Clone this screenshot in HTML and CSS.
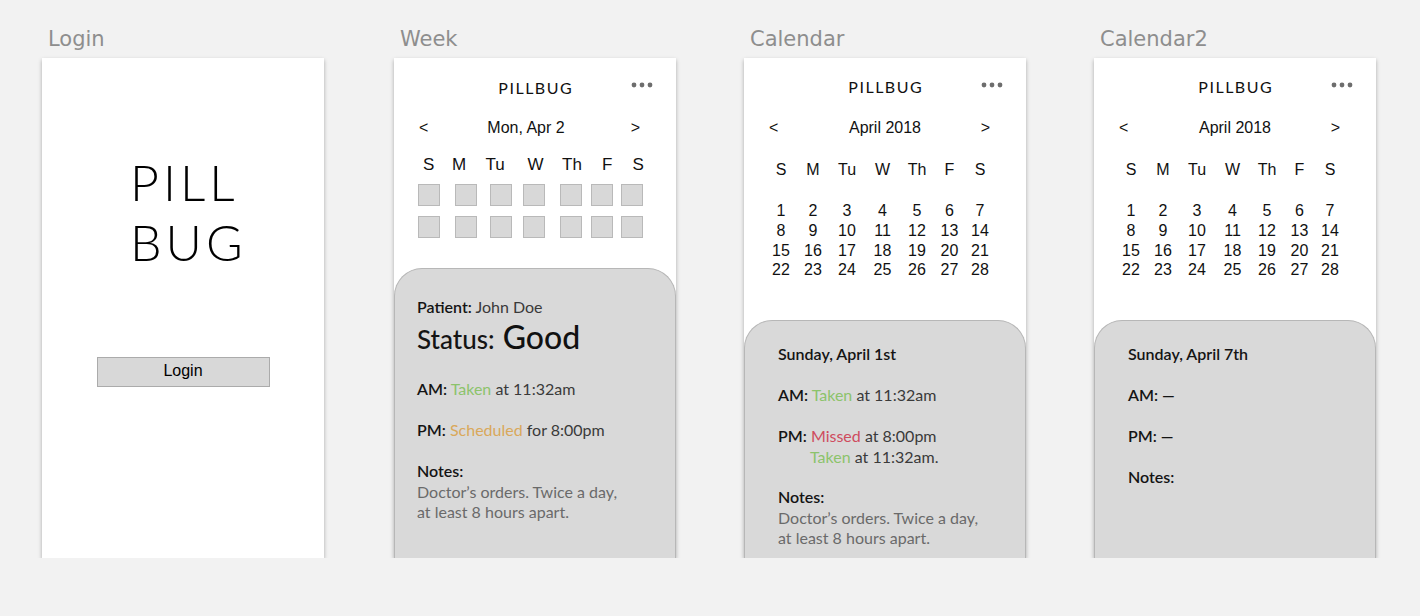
FILE: index.html
```html
<!DOCTYPE html>
<html lang="en">
	<head>

		<meta charset="UTF-8">
		<title>Pillbug</title>

		<link rel="stylesheet" href="styles.css">

	</head>
	<body>

		<div class="canvas">

			<!-- Login -->
			<div class="board-col first">
				<div class="board-label">Login</div>
				<div class="board login">
					<div class="brand">PILL<br>BUG</div>
					<div class="login-btn">Login</div>
				</div>
			</div>

			<!-- Week -->
			<div class="board-col">
				<div class="board-label">Week</div>
				<div class="board week">
					<div class="top-bar">
						<span></span>
						<span class="app-name">PILLBUG</span>
						<svg class="more" viewBox="0 0 22 6"><circle cx="3" cy="3" r="2.4"/><circle cx="11" cy="3" r="2.4"/><circle cx="19" cy="3" r="2.4"/></svg>
					</div>
					<div class="nav">
						<span>&lt;</span>
						<span class="nav-title">Mon, Apr 2</span>
						<span class="nav-next">&gt;</span>
					</div>
					<div class="week-days">
						<span>S</span><span>M</span><span>Tu</span><span>W</span><span>Th</span><span>F</span><span>S</span>
					</div>
					<div class="week-boxes">
						<span class="box"></span><span class="box"></span><span class="box"></span><span class="box"></span><span class="box"></span><span class="box"></span><span class="box"></span>
						<span class="box"></span><span class="box"></span><span class="box"></span><span class="box"></span><span class="box"></span><span class="box"></span><span class="box"></span>
					</div>
					<div class="sheet">
						<div><b>Patient:</b> John Doe</div>
						<div class="status"><b>Status:</b> Good</div>
						<div class="row am"><b>AM:</b> <span class="taken">Taken</span> at 11:32am</div>
						<div class="row"><b>PM:</b> <span class="scheduled">Scheduled</span> for 8:00pm</div>
						<div class="row"><b>Notes:</b></div>
						<div class="notes-text">Doctor’s orders. Twice a day,<br>at least 8 hours apart.</div>
					</div>
				</div>
			</div>

			<!-- Calendar -->
			<div class="board-col">
				<div class="board-label">Calendar</div>
				<div class="board calendar">
					<div class="top-bar">
						<span></span>
						<span class="app-name">PILLBUG</span>
						<svg class="more" viewBox="0 0 22 6"><circle cx="3" cy="3" r="2.4"/><circle cx="11" cy="3" r="2.4"/><circle cx="19" cy="3" r="2.4"/></svg>
					</div>
					<div class="nav">
						<span>&lt;</span>
						<span class="nav-title">April 2018</span>
						<span class="nav-next">&gt;</span>
					</div>
					<div class="cal-grid cal-days">
						<span>S</span><span>M</span><span>Tu</span><span>W</span><span>Th</span><span>F</span><span>S</span>
					</div>
					<div class="cal-grid cal-dates">
						<span>1</span><span>2</span><span>3</span><span>4</span><span>5</span><span>6</span><span>7</span>
						<span>8</span><span>9</span><span>10</span><span>11</span><span>12</span><span>13</span><span>14</span>
						<span>15</span><span>16</span><span>17</span><span>18</span><span>19</span><span>20</span><span>21</span>
						<span>22</span><span>23</span><span>24</span><span>25</span><span>26</span><span>27</span><span>28</span>
					</div>
					<div class="sheet">
						<div><b>Sunday, April 1st</b></div>
						<div class="row"><b>AM:</b> <span class="taken">Taken</span> at 11:32am</div>
						<div class="row pm-multi">
							<div><b>PM:</b> <span class="missed">Missed</span> at 8:00pm</div>
							<div class="later"><span class="taken">Taken</span> at 11:32am.</div>
						</div>
						<div class="row notes"><b>Notes:</b></div>
						<div class="notes-text">Doctor’s orders. Twice a day,<br>at least 8 hours apart.</div>
					</div>
				</div>
			</div>

			<!-- Calendar2 -->
			<div class="board-col">
				<div class="board-label">Calendar2</div>
				<div class="board calendar">
					<div class="top-bar">
						<span></span>
						<span class="app-name">PILLBUG</span>
						<svg class="more" viewBox="0 0 22 6"><circle cx="3" cy="3" r="2.4"/><circle cx="11" cy="3" r="2.4"/><circle cx="19" cy="3" r="2.4"/></svg>
					</div>
					<div class="nav">
						<span>&lt;</span>
						<span class="nav-title">April 2018</span>
						<span class="nav-next">&gt;</span>
					</div>
					<div class="cal-grid cal-days">
						<span>S</span><span>M</span><span>Tu</span><span>W</span><span>Th</span><span>F</span><span>S</span>
					</div>
					<div class="cal-grid cal-dates">
						<span>1</span><span>2</span><span>3</span><span>4</span><span>5</span><span>6</span><span>7</span>
						<span>8</span><span>9</span><span>10</span><span>11</span><span>12</span><span>13</span><span>14</span>
						<span>15</span><span>16</span><span>17</span><span>18</span><span>19</span><span>20</span><span>21</span>
						<span>22</span><span>23</span><span>24</span><span>25</span><span>26</span><span>27</span><span>28</span>
					</div>
					<div class="sheet">
						<div><b>Sunday, April 7th</b></div>
						<div class="row"><b>AM: —</b></div>
						<div class="row"><b>PM: —</b></div>
						<div class="row"><b>Notes:</b></div>
					</div>
				</div>
			</div>

		</div>

	</body>
</html>
```

FILE: styles.css
```css
/* all */
* {
	margin: 0;
	padding: 0;
	box-sizing: border-box;
}

body {
	background: #f2f2f2;
	font-family: "Liberation Sans", Arial, sans-serif;
	color: #111;
}

/* artboards canvas */
.canvas {
	display: flex;
	gap: 68px;
	padding: 27px 0 0 42px;
}

.board-col {
	display: flex;
	flex-direction: column;
	gap: 7px;
}

.board-col.first {
	margin-right: 2px;
}

.board-label {
	padding-left: 6px;
	font-family: "DejaVu Sans", sans-serif;
	font-size: 21px;
	line-height: 24px;
	color: #8e8e8e;
}

.board {
	width: 282px;
	height: 500px;
	background: #fff;
	box-shadow: 0 2px 4px rgba(0, 0, 0, 0.3);
	display: flex;
	flex-direction: column;
	overflow: hidden;
}

/* login */
.brand {
	margin-top: 93.5px;
	padding-left: 88px;
	font-family: Lato, sans-serif;
	font-weight: 300;
	font-size: 50px;
	line-height: 60px;
	letter-spacing: 4px;
	color: #000;
}

.login-btn {
	margin: 85px auto 0;
	width: 173px;
	height: 30px;
	background: #d8d8d8;
	border: 1px solid #ababab;
	text-align: center;
	font-size: 16px;
	line-height: 26px;
	color: #000;
}

/* top bar */
.top-bar {
	display: grid;
	grid-template-columns: 22px 1fr 22px;
	padding: 0 23px;
	margin-top: 20px;
}

.calendar .top-bar {
	margin-top: 18.5px;
}

.app-name {
	text-align: center;
	padding-left: 1.5px;
	font-family: Lato, sans-serif;
	font-size: 16px;
	line-height: 20px;
	letter-spacing: 1.5px;
	color: #111;
}

.more {
	width: 22px;
	height: 6px;
	margin-top: 4px;
	fill: #6d6d6d;
}

.calendar .more {
	margin-top: 5.5px;
}

/* prev / next */
.nav {
	display: grid;
	grid-template-columns: 1fr auto 1fr;
	padding: 0 25px;
	margin-top: 19.5px;
	font-size: 16px;
	line-height: 20px;
}

.calendar .nav {
	margin-top: 21px;
}

.nav-next {
	justify-self: end;
	margin-right: 11px;
}

.week .nav-title {
	margin-right: 18px;
}

/* week strip */
.week-days {
	display: grid;
	grid-template-columns: 29px 33.5px 42px 34.5px 40px 30.5px auto;
	padding-left: 29px;
	margin-top: 17.3px;
	font-size: 17px;
	line-height: 20px;
}

.week-boxes {
	display: grid;
	grid-template-columns: 37px 34.5px 33.5px 37px 31px 30px 22px;
	row-gap: 10px;
	padding-left: 24px;
	margin-top: 9.2px;
}

.box {
	width: 22px;
	height: 22px;
	background: #d8d8d8;
	border: 1px solid #b9b9b9;
}

/* month grid */
.cal-grid {
	display: grid;
	grid-template-columns: 32px 32px 36px 35px 34px 31px 30px;
	padding-left: 21px;
	text-align: center;
	font-size: 16px;
}

.cal-days {
	margin-top: 22px;
	line-height: 20px;
}

.cal-dates {
	margin-top: 21.6px;
	line-height: 19.7px;
}

/* bottom sheet */
.sheet {
	flex: 1;
	margin-top: 30px;
	padding: 28px 0 0 22px;
	background: #d9d9d9;
	border: 1px solid #b7b7b7;
	border-bottom: 0;
	border-radius: 28px 28px 0 0;
	font-family: Lato, sans-serif;
	font-weight: 400;
	font-size: 16px;
	line-height: 20px;
	color: #3a3a3a;
}

.calendar .sheet {
	margin-top: 40px;
	padding: 22.8px 0 0 33px;
}

.sheet b {
	font-weight: 600;
	color: #141414;
}

.row {
	margin-top: 21px;
}

.week .am {
	margin-top: 23px;
}

.status {
	margin-top: 1px;
	font-size: 32px;
	line-height: 38px;
	font-weight: 500;
	color: #111;
}

.status b {
	font-size: 26px;
	line-height: 20px;
	font-weight: 500;
}

.pm-multi {
	margin-top: 20.5px;
	line-height: 21px;
}

.later {
	padding-left: 32px;
}

.notes {
	margin-top: 19.5px;
}

.notes-text {
	margin-top: 1.5px;
	color: #6a6a6a;
}

.taken {
	color: #8cc36b;
}

.scheduled {
	color: #d9a85a;
}

.missed {
	color: #cf4c5e;
}
```
